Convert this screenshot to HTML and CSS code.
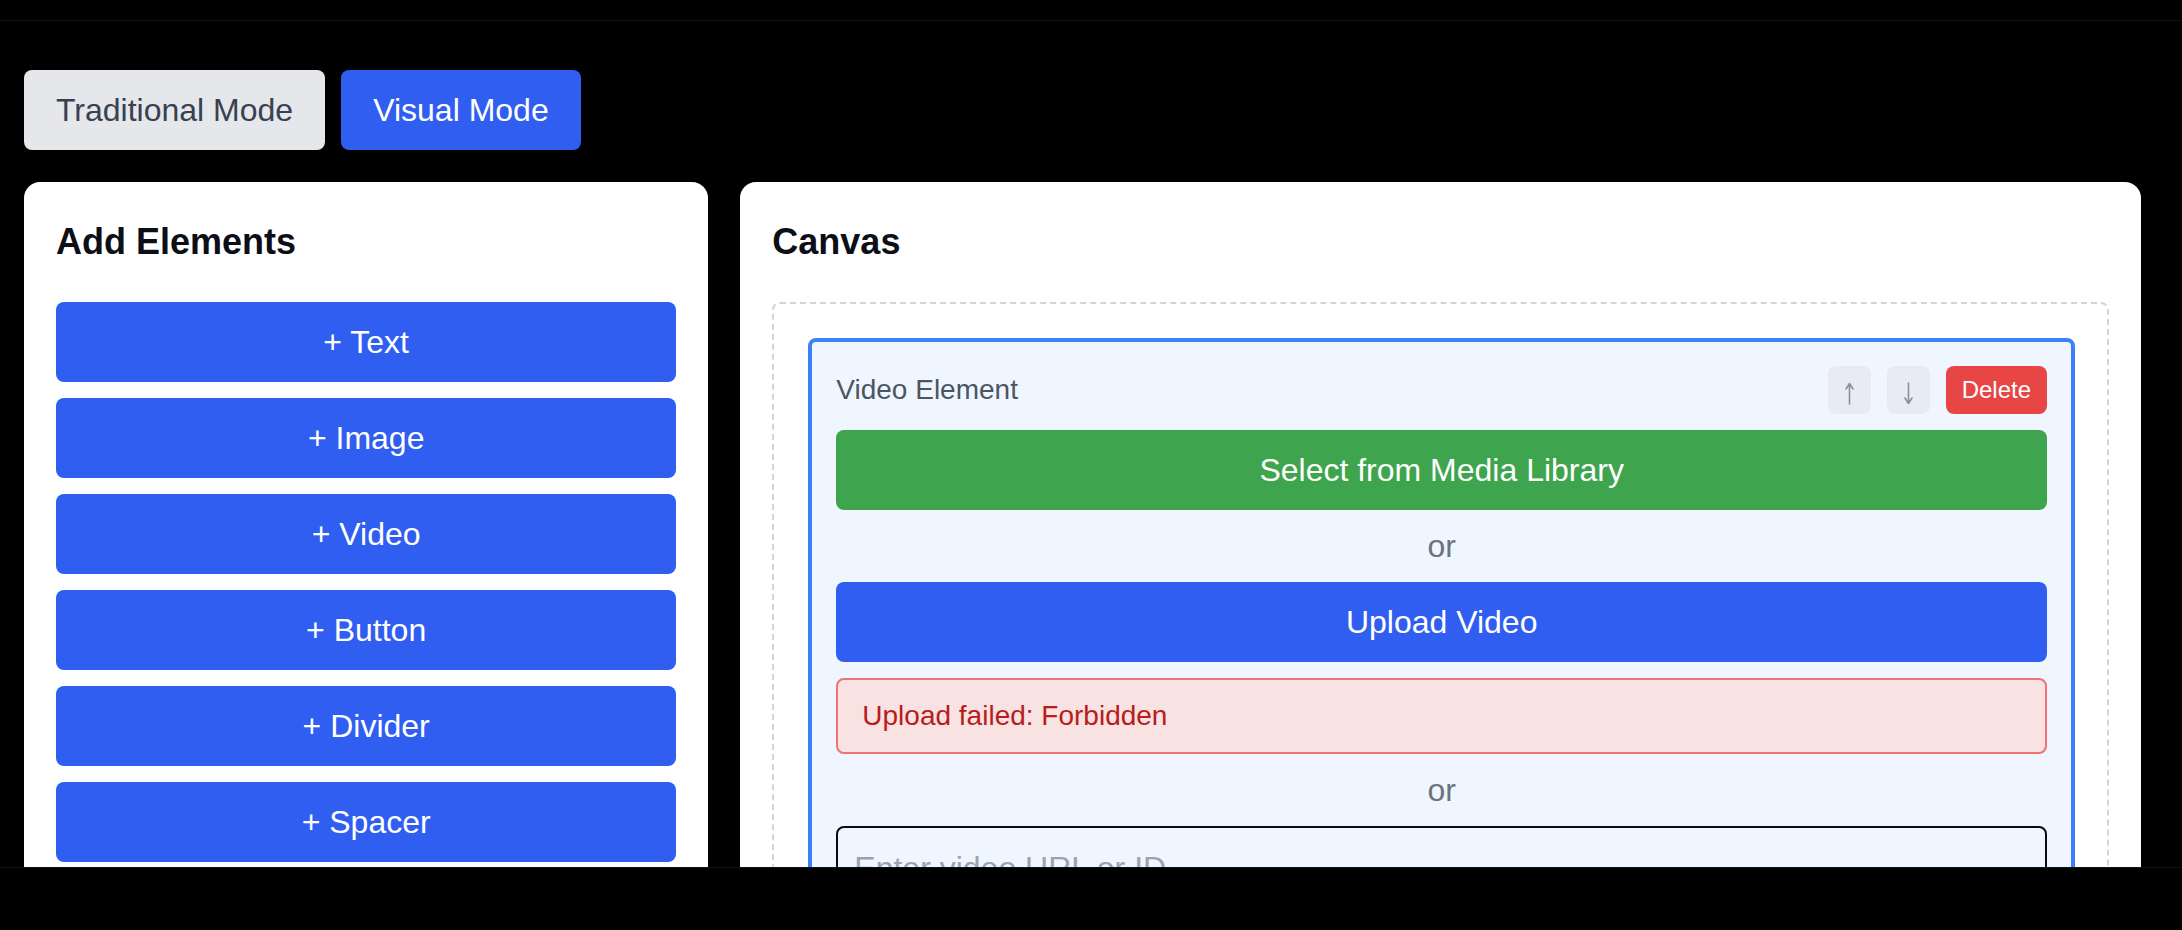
FILE: index.html
```html
<!DOCTYPE html>
<html lang="en">
<head>
    <meta charset="UTF-8">
    <meta name="viewport" content="width=device-width, initial-scale=1.0">
    <title>Email Builder | Visual Mode</title>
    <link rel="stylesheet" href="styles.css">
</head>
<body>
    <div class="topbar"></div>

    <div class="page">
        <div class="mode-switch">
            <button class="mode-btn">Traditional Mode</button>
            <button class="mode-btn active">Visual Mode</button>
        </div>

        <div class="editor">
            <!-- element palette -->
            <div class="panel">
                <h2>Add Elements</h2>
                <button class="add-btn">+ Text</button>
                <button class="add-btn">+ Image</button>
                <button class="add-btn">+ Video</button>
                <button class="add-btn">+ Button</button>
                <button class="add-btn">+ Divider</button>
                <button class="add-btn">+ Spacer</button>
            </div>

            <!-- canvas -->
            <div class="panel canvas-panel">
                <h2>Canvas</h2>
                <div class="drop-zone">
                    <div class="element-card">
                        <div class="card-head">
                            <span class="card-title">Video Element</span>
                            <div class="card-actions">
                                <button class="icon-btn" title="Move up">
                                    <svg width="11" height="32" viewBox="0 0 11 32"><path d="M5.5 9.5V30M2 15l3.5-5.5L9 15"/></svg>
                                </button>
                                <button class="icon-btn" title="Move down">
                                    <svg width="11" height="32" viewBox="0 0 11 32"><path d="M5.5 9V29.5M2 24l3.5 5.5L9 24"/></svg>
                                </button>
                                <button class="delete-btn">Delete</button>
                            </div>
                        </div>
                        <button class="wide-btn media-btn">Select from Media Library</button>
                        <div class="or">or</div>
                        <button class="wide-btn upload-btn">Upload Video</button>
                        <div class="upload-error">Upload failed: Forbidden</div>
                        <div class="or">or</div>
                        <input type="text" class="url-input" placeholder="Enter video URL or ID">
                    </div>
                </div>
            </div>
        </div>
    </div>

    <div class="bottombar"></div>
</body>
</html>
```

FILE: styles.css
```css
html, body {
    overflow: hidden;
}

body {
    margin: 0;
    padding: 0;
    background-color: #000;
    font-family: "Liberation Sans", Arial, sans-serif;
}

button {
    font-family: inherit;
    border: none;
    cursor: pointer;
}

.topbar {
    height: 20px;
    border-bottom: 1px solid #0b1022;
}

.page {
    padding: 49px 41px 0 24px;
}

.mode-switch {
    display: flex;
    gap: 16px;
}

.mode-btn {
    padding: 16px 32px;
    font-size: 32px;
    line-height: 48px;
    border-radius: 8px;
    background-color: #e5e7eb;
    color: #374151;
}

.mode-btn.active {
    background-color: #2f5ef1;
    color: #fff;
}

.editor {
    display: grid;
    grid-template-columns: repeat(3, 1fr);
    gap: 32px;
    margin-top: 32px;
}

.panel {
    background-color: #fff;
    border-radius: 16px;
    padding: 32px;
}

.canvas-panel {
    grid-column: span 2;
}

.panel h2 {
    margin: 0 0 32px;
    font-size: 36px;
    line-height: 56px;
    font-weight: bold;
    color: #0d0f17;
}

.add-btn {
    display: block;
    width: 100%;
    padding: 16px;
    margin-bottom: 16px;
    font-size: 32px;
    line-height: 48px;
    color: #fff;
    background-color: #2f5ef1;
    border-radius: 8px;
}

.drop-zone {
    border: 2px dashed #d1d5db;
    border-radius: 8px;
    padding: 34px 32px 32px 34px;
    min-height: 600px;
}

.element-card {
    border: 4px solid #3b82f6;
    background-color: #eff6ff;
    border-radius: 8px;
    padding: 24px;
}

.card-head {
    display: flex;
    justify-content: space-between;
    align-items: center;
    margin-bottom: 16px;
}

.card-title {
    font-size: 28px;
    line-height: 40px;
    color: #4b5563;
}

.card-actions {
    display: flex;
    gap: 16px;
}

.icon-btn {
    display: flex;
    padding: 8px 16px;
    background-color: #e8ebf3;
    border-radius: 8px;
}

.icon-btn svg {
    fill: none;
    stroke: #8b909a;
    stroke-width: 1.6;
    stroke-linecap: round;
    stroke-linejoin: round;
}

.delete-btn {
    padding: 8px 16px;
    font-size: 24px;
    line-height: 32px;
    color: #fff;
    background-color: #e84545;
    border-radius: 8px;
}

.wide-btn {
    display: block;
    width: 100%;
    padding: 16px;
    font-size: 32px;
    line-height: 48px;
    color: #fff;
    border-radius: 8px;
}

.media-btn {
    background-color: #3ea44d;
}

.upload-btn {
    background-color: #2f5ef1;
}

.or {
    margin: 12px 0;
    text-align: center;
    font-size: 32px;
    line-height: 48px;
    color: #6b7280;
}

.upload-error {
    margin-top: 16px;
    padding: 16px 24px;
    font-size: 28px;
    line-height: 40px;
    color: #b91c1c;
    background-color: #f9e2e2;
    border: 2px solid #f07272;
    border-radius: 8px;
}

.url-input {
    display: block;
    width: 100%;
    box-sizing: border-box;
    padding: 16px;
    font-family: inherit;
    font-size: 32px;
    line-height: 48px;
    background-color: transparent;
    border: 2px solid #0a0a14;
    border-radius: 8px;
}

.url-input::placeholder {
    color: #9ca3af;
}

/* black strip that sits over the bottom of the page */
.bottombar {
    position: fixed;
    left: 0;
    right: 0;
    bottom: 0;
    height: 62px;
    background-color: #000;
    border-top: 1px solid #0b1022;
}
```
